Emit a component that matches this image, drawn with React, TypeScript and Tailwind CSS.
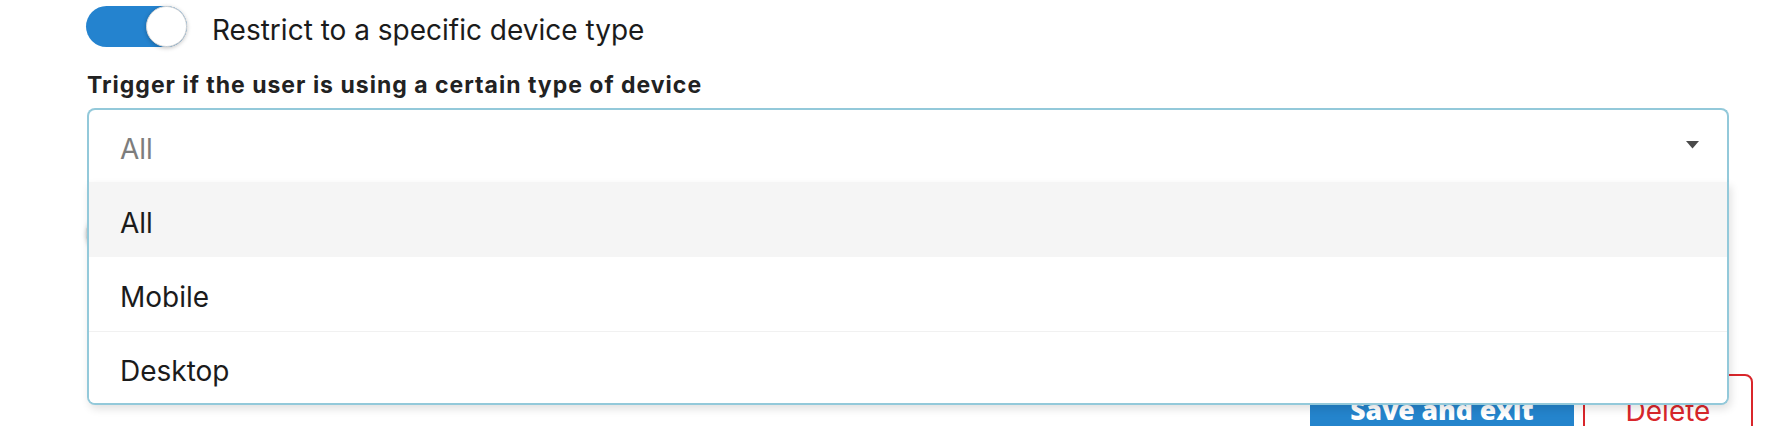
import React from "react";

const body = "font-['Inter',_'Liberation_Sans',_sans-serif]";

function Toggle({ on }: { on: boolean }) {
  return (
    <div
      className={`relative w-[101px] h-[41px] rounded-full shrink-0 ${
        on ? "bg-[#2483cf]" : "bg-[#d9d9d9]"
      }`}
    >
      <div
        className={`absolute top-0 ${
          on ? "right-0" : "left-0"
        } w-[41px] h-[41px] rounded-full bg-white border border-[#d6d6d6] shadow-[0_1px_4px_rgba(0,0,0,0.25)]`}
      />
    </div>
  );
}

export default function App() {
  const options = [
    { label: "All", h: "h-[75px]", active: true },
    { label: "Mobile", h: "h-[74px]", active: false },
    { label: "Desktop", h: "h-[72px]", active: false },
  ];
  return (
    <div className={`w-[1788px] h-[426px] overflow-hidden bg-white ${body}`}>
      <div className="pl-[86px] pr-[35px] pt-[6px]">
        <div className="flex items-center h-[41px] gap-[25px]">
          <Toggle on />
          <span className="text-[28px] h-[41px] leading-[49px] text-[#1b1b1b]">
            Restrict to a specific device type
          </span>
        </div>

        <div className="mt-[23px] ml-[1px] text-[23px] leading-[30px] font-bold text-[#222222] tracking-[1px]">
          Trigger if the user is using a certain type of device
        </div>

        <div className="relative mt-[8px] ml-[1px] w-[1642px] z-10">
          <div className="h-[74px] border-2 border-b-0 border-[#93c9da] rounded-t-[8px] bg-white flex items-center justify-between pl-[31px] pr-[28px]">
            <span className="text-[28px] pt-[6px] text-[#7d7d7d]">All</span>
            <svg width="13" height="8" viewBox="0 0 13 8" className="mt-[-2px]">
              <path d="M0 0 L13 0 L6.5 7.5 Z" fill="#4a4a4a" />
            </svg>
          </div>
          <div className="absolute top-full left-0 right-0 border-2 border-t-0 border-[#93c9da] rounded-b-[8px] bg-white shadow-[2px_4px_8px_rgba(0,0,0,0.12)] overflow-hidden">
            {options.map((o, i) => (
              <div
                key={o.label}
                className={`${o.h} flex items-center pl-[31px] pt-[6px] text-[28px] text-[#1b1b1b] ${
                  o.active ? "bg-[#f5f5f5]" : "bg-white"
                } ${i === 2 ? "border-t border-[#f1f1f1]" : ""}`}
              >
                {o.label}
              </div>
            ))}
          </div>
        </div>

        <div className="mt-[31px] flex items-center gap-[25px]">
          <Toggle on={false} />
          <span className="text-[28px] leading-[41px] text-[#1b1b1b]">
            Restrict to specific pages
          </span>
        </div>

        <div className="mt-[120px] flex justify-end gap-[9px]">
          <button className="w-[264px] h-[72px] pt-[2px] bg-[#2484cc] rounded-[4px] text-white text-[26.5px] font-extrabold font-['Open_Sans',_sans-serif]">
            Save and exit
          </button>
          <button className="w-[170px] h-[72px] pt-[2px] border-2 border-[#d9262b] rounded-[8px] text-[#d9262b] text-[28px]">
            Delete
          </button>
        </div>
      </div>
    </div>
  );
}
